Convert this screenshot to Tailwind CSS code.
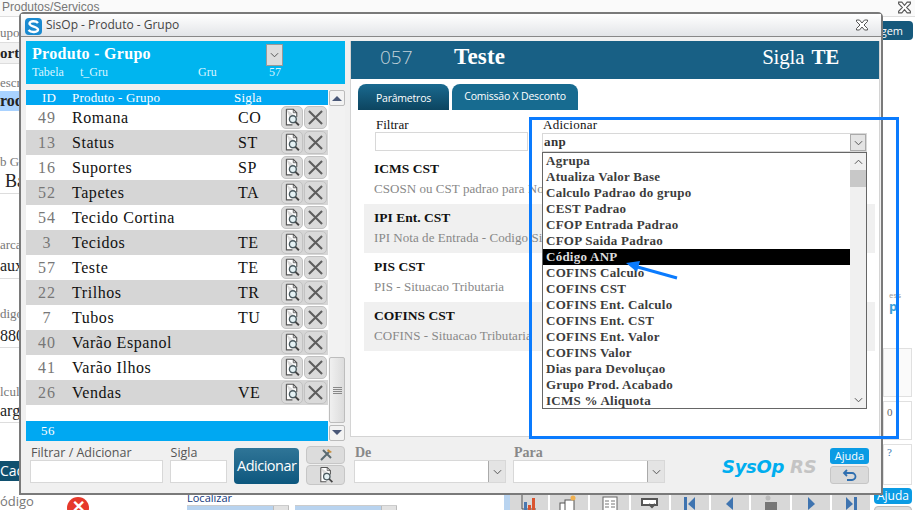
<!DOCTYPE html>
<html lang="pt">
<head>
<meta charset="utf-8">
<title>SisOp</title>
<script src="https://cdn.jsdelivr.net/npm/@tailwindcss/browser@4"></script>
</head>
<body class="m-0">
<svg class="hidden" width="0" height="0">
  <symbol id="find" viewBox="0 0 20 22">
    <path d="M3.5 1.5h8l4 4v5M3.5 1.5v18h7" fill="#fff" stroke="#555" stroke-width="1.3"/>
    <path d="M11.5 1.5v4h4" fill="none" stroke="#555" stroke-width="1"/>
    <circle cx="11" cy="13" r="4" fill="#e4f1f4" stroke="#4a5a60" stroke-width="1.6"/>
    <path d="M14 16l4 4" stroke="#444" stroke-width="2.2"/>
  </symbol>
  <symbol id="del" viewBox="2 2 16 16">
    <path d="M3 3l14 14M17 3L3 17" stroke="#5e5e5e" stroke-width="2.2" fill="none"/>
  </symbol>
  <symbol id="chev" viewBox="0 0 10 6">
    <path d="M1 1l4 4 4-4" stroke="#555" stroke-width="1.1" fill="none"/>
  </symbol>
  <symbol id="close" viewBox="0 0 14 12">
    <path d="M1.5 1h3l2.5 3 2.5-3h3v1.5L9 6l3.5 3.5V11h-3L7 8l-2.5 3h-3V9.500L5 6 1.500 2.500z" fill="#fff" stroke="#555" stroke-width="1"/>
  </symbol>
</svg>

<div class="relative w-[915px] h-[510px] overflow-hidden bg-white font-['Liberation_Serif',serif]">

  <!-- desktop behind the window -->
  <div class="flex flex-col h-full">
    <div class="flex justify-between h-[17px] bg-[#fafafa] border-b border-[#dedede] pl-[2px] pr-[3px] text-[12px] leading-[15px] text-[#777] font-['Liberation_Sans',sans-serif]">
      <span>Produtos/Servicos</span>
      <svg class="w-[15px] h-[13px] mt-[1px]"><use href="#close"/></svg>
    </div>
    <div class="flex flex-1 min-h-0">
      <div class="w-[60px] flex flex-col text-[#777] text-[13px] leading-[16px] whitespace-nowrap overflow-hidden">
        <div class="mt-[8px] h-[16px]">upo</div>
        <div class="mt-[1px] h-[22px] bg-[#f2f2f2] border-y border-[#ddd] text-[15px] leading-[20px] font-bold text-[#222]">ort</div>
        <div class="mt-[11px] h-[16px]">escr</div>
        <div class="h-[20px] bg-[#a9d2ff] text-[16px] leading-[20px] font-bold text-[#222]">rod</div>
        <div class="mt-[43px] h-[16px]">b Gr</div>
        <div class="mt-[1px] h-[23px] border-b border-[#ddd] pl-[5px] text-[18px] leading-[21px] text-[#222]">Ba</div>
        <div class="mt-[43px] h-[16px]">arca</div>
        <div class="mt-[3px] h-[23px] border-b border-[#ddd] text-[16px] leading-[20px] text-[#222]">aux</div>
        <div class="mt-[27px] h-[16px]">digo</div>
        <div class="mt-[4px] h-[22px] border-b border-[#ddd] text-[16px] leading-[20px] text-[#222]">880</div>
        <div class="mt-[36px] h-[16px]">lcul</div>
        <div class="mt-[1px] h-[22px] border-b border-[#ddd] text-[16px] leading-[20px] text-[#222]">arg</div>
        <div class="mt-[38px] h-[20px] bg-[#10506f] text-white text-[14px] leading-[20px] font-['Open_Sans',sans-serif]">Cad</div>
        <div class="mt-[12px] h-[16px] text-[13px] font-['Open_Sans',sans-serif]">ódigo</div>
      </div>
      <div class="flex-1 relative flex flex-col items-end">
        <div class="mt-[4px] mr-[2px] w-[35px] h-[19px] bg-[#16597c] rounded-[4px] text-white text-[11px] leading-[19px] text-right pr-[10px] font-['Open_Sans',sans-serif]">gem</div>
        <div class="mt-[250px] mr-[6px] w-[20px] text-[8px] leading-[9px] text-[#999] font-['Open_Sans',sans-serif]">ess</div>
        <div class="mr-[6px] w-[20px] text-[13px] leading-[14px] font-bold text-[#3aa0d8] font-['Open_Sans',sans-serif]">p</div>
        <div class="mt-[35px] mr-[3px] w-[29px] h-[49px] bg-[#fafafa] border border-[#e0e0e0]"></div>
        <div class="mt-[4px] mr-[3px] w-[29px] h-[39px] bg-white border border-[#e0e0e0] pl-[3px] text-[11px] leading-[20px] text-[#666]">0</div>
        <div class="mt-[4px] mr-[3px] w-[29px] h-[41px] bg-white border border-[#e0e0e0] pl-[3px] text-[11px] leading-[14px] text-[#3a78b0]">?</div>
      </div>
    </div>
  </div>

  <!-- lower strip behind the window -->
  <div class="absolute left-[60px] right-0 top-[494px] h-[16px] flex items-start overflow-hidden">
    <div class="relative w-[127px] h-full">
      <div class="absolute left-[7px] top-[3px] w-[22px] h-[22px] rounded-full bg-[#e6392b] text-white text-center text-[16px] leading-[18px] font-bold font-['Open_Sans',sans-serif]">✕</div>
    </div>
    <div class="flex flex-col w-[317px]">
      <div class="h-[11px] text-[11px] leading-[8px] text-[#12387c] font-['Open_Sans',sans-serif]">Localizar</div>
      <div class="flex gap-[6px]">
        <div class="w-[102px] h-[8px] bg-[#b8d3ef] border-t border-[#ccc] flex justify-end"><div class="w-[16px] bg-[#e2e2e2] border-x border-[#bbb]"></div></div>
        <div class="w-[102px] h-[8px] bg-[#b8d3ef] border-t border-[#ccc] flex justify-end"><div class="w-[16px] bg-[#e2e2e2] border-x border-[#bbb]"></div></div>
      </div>
    </div>
    <div class="w-[6px] h-full bg-[#b9d4f0]"></div>
    <div class="flex gap-[2px] h-full">
      <div class="w-[38px] bg-[#d8d8d8] flex justify-center pt-[1px]"><svg width="16" height="16" viewBox="0 0 16 16"><path d="M1 0v14h14" stroke="#555" fill="none"/><path d="M3 7h3v8H3z" fill="#4a78b0"/><path d="M7 10h3v5H7z" fill="#d9542f"/><path d="M11 3h3v12h-3z" fill="#d9542f"/></svg></div>
      <div class="w-[38px] bg-[#d8d8d8] flex justify-center"><svg width="24" height="16" viewBox="0 0 24 16"><rect x="3" y="9" width="8" height="8" fill="#fff" stroke="#555"/><rect x="8" y="6" width="9" height="11" fill="#fff" stroke="#555"/><circle cx="16" cy="4" r="2.500" fill="#f0b050"/></svg></div>
      <div class="w-[39px] bg-[#d8d8d8] flex justify-center"><svg width="18" height="16" viewBox="0 0 18 16"><rect x="2" y="3" width="14" height="14" fill="#fff" stroke="#666"/><path d="M4 7h4M4 10h4M4 13h4M10 7h4M10 10h4M10 13h4" stroke="#777"/></svg></div>
      <div class="w-[38px] bg-[#d8d8d8] flex justify-center"><svg width="18" height="16" viewBox="0 0 18 16"><rect x="1" y="5" width="15" height="6" fill="#fff" stroke="#555" stroke-width="2"/><path d="M8 10l3 3 3-3" stroke="#555" fill="none" stroke-width="2"/></svg></div>
      <div class="w-[38px] bg-[#d8d8d8] flex justify-center"><svg width="14" height="16" viewBox="0 0 14 16"><path d="M1 3h3v13H1zM12 3v13L5 10z" fill="#3f74b0"/></svg></div>
      <div class="w-[38px] bg-[#d8d8d8] flex justify-center"><svg width="14" height="16" viewBox="0 0 14 16"><path d="M10 3v13L3 10z" fill="#3f74b0"/></svg></div>
      <div class="w-[39px] bg-[#d8d8d8] flex justify-center"><svg width="18" height="16" viewBox="0 0 18 16"><circle cx="6" cy="4" r="2.500" fill="#bbb"/><rect x="3" y="8" width="12" height="8" fill="#777"/></svg></div>
      <div class="w-[38px] bg-[#d8d8d8] flex justify-center"><svg width="14" height="16" viewBox="0 0 14 16"><path d="M4 3v13l7-6z" fill="#3f74b0"/></svg></div>
      <div class="w-[38px] bg-[#d8d8d8] flex justify-center"><svg width="14" height="16" viewBox="0 0 14 16"><path d="M2 3v13l7-6zM10 3h3v13h-3z" fill="#3f74b0"/></svg></div>
    </div>
  </div>
  <div class="absolute left-[874px] top-[488px] w-[38px] h-[16px] rounded-[4px] bg-[#0a9be4] text-white text-[12px] leading-[16px] text-center font-['Open_Sans',sans-serif]">Ajuda</div>
  <div class="absolute left-[874px] top-[506px] w-[38px] h-[6px] rounded-t-[4px] bg-[#ddd] border border-[#bbb]"></div>

  <!-- dialog window -->
  <div class="absolute left-[19px] top-[12px] w-[864px] h-[483px] border-2 border-[#7a7a7a] rounded-tl-[5px] rounded-tr-[5px] bg-[#f0f0f0] flex flex-col">
    <div class="h-[23px] flex items-center pl-[4px] pr-[12px] bg-linear-to-b from-white to-[#e3e5e8] border-b border-[#888] text-[12px] text-[#444] font-['Open_Sans',sans-serif]">
      <svg width="17" height="17" viewBox="0 0 17 17" class="mr-[4px] mt-[2px]"><rect width="17" height="17" rx="4" fill="#1a8ad0"/><path d="M13 5c-2-2.500-8-2.500-8.500.5S13 8.500 13 11.500 6 15 3.500 12" fill="none" stroke="#fff" stroke-width="2.400"/></svg>
      <span class="flex-1">SisOp - Produto - Grupo</span>
      <svg class="w-[14px] h-[12px]"><use href="#close"/></svg>
    </div>

    <div class="flex flex-1 min-h-0 pl-[5px] pt-[4px] gap-[5px]">
      <!-- left column -->
      <div class="w-[319px] flex flex-col">
        <div class="h-[43px] bg-[#00b5ef] text-white px-[6px] relative">
          <div class="text-[16px] leading-[20px] pt-[3px] font-bold tracking-[0.3px] h-[23px]">Produto - Grupo</div>
          <div class="grid grid-cols-[48px_118px_71px_30px] text-[12px] leading-[14px] mt-[1px] text-[#d8f4ff]">
            <span>Tabela</span><span>t_Gru</span><span>Gru</span><span>57</span>
          </div>
          <div class="absolute left-[240px] top-[3px] w-[17px] h-[22px] bg-[#dcdcdc] border border-[#999] flex items-center justify-center"><svg class="w-[9px] h-[6px]"><use href="#chev"/></svg></div>
        </div>

        <div class="mt-[6px] h-[351px] flex bg-white">
          <div class="w-[302px] flex flex-col text-[16px] tracking-[0.55px] text-[#111]">
            <div class="h-[15px] bg-[#00a8f2] text-white text-[13px] leading-[15px] grid grid-cols-[46px_162px_1fr] tracking-[0.2px]">
              <span class="text-center">ID</span><span>Produto - Grupo</span><span>Sigla</span>
            </div>
            <div class="h-[25px] grid grid-cols-[42px_170px_43px_23px_23px] items-center bg-white"><span class="text-center text-[#777] tracking-[1px]">49</span><span class="pl-[4px]">Romana</span><span>CO</span><svg class="box-border w-[22px] h-[23px] p-[1px] bg-[#dadada] rounded-[5px] border border-[#c2c2c2]"><use href="#find"/></svg><svg class="box-border w-[23px] h-[23px] p-[3px] bg-[#dadada] rounded-[5px] border border-[#c2c2c2]"><use href="#del"/></svg></div>
            <div class="h-[25px] grid grid-cols-[42px_170px_43px_23px_23px] items-center bg-[#d6d6d6]"><span class="text-center text-[#777] tracking-[1px]">13</span><span class="pl-[4px]">Status</span><span>ST</span><svg class="box-border w-[22px] h-[23px] p-[1px] bg-[#dadada] rounded-[5px] border border-[#c2c2c2]"><use href="#find"/></svg><svg class="box-border w-[23px] h-[23px] p-[3px] bg-[#dadada] rounded-[5px] border border-[#c2c2c2]"><use href="#del"/></svg></div>
            <div class="h-[25px] grid grid-cols-[42px_170px_43px_23px_23px] items-center bg-white"><span class="text-center text-[#777] tracking-[1px]">16</span><span class="pl-[4px]">Suportes</span><span>SP</span><svg class="box-border w-[22px] h-[23px] p-[1px] bg-[#dadada] rounded-[5px] border border-[#c2c2c2]"><use href="#find"/></svg><svg class="box-border w-[23px] h-[23px] p-[3px] bg-[#dadada] rounded-[5px] border border-[#c2c2c2]"><use href="#del"/></svg></div>
            <div class="h-[25px] grid grid-cols-[42px_170px_43px_23px_23px] items-center bg-[#d6d6d6]"><span class="text-center text-[#777] tracking-[1px]">52</span><span class="pl-[4px]">Tapetes</span><span>TA</span><svg class="box-border w-[22px] h-[23px] p-[1px] bg-[#dadada] rounded-[5px] border border-[#c2c2c2]"><use href="#find"/></svg><svg class="box-border w-[23px] h-[23px] p-[3px] bg-[#dadada] rounded-[5px] border border-[#c2c2c2]"><use href="#del"/></svg></div>
            <div class="h-[25px] grid grid-cols-[42px_170px_43px_23px_23px] items-center bg-white"><span class="text-center text-[#777] tracking-[1px]">54</span><span class="pl-[4px]">Tecido Cortina</span><span></span><svg class="box-border w-[22px] h-[23px] p-[1px] bg-[#dadada] rounded-[5px] border border-[#c2c2c2]"><use href="#find"/></svg><svg class="box-border w-[23px] h-[23px] p-[3px] bg-[#dadada] rounded-[5px] border border-[#c2c2c2]"><use href="#del"/></svg></div>
            <div class="h-[25px] grid grid-cols-[42px_170px_43px_23px_23px] items-center bg-[#d6d6d6]"><span class="text-center text-[#777] tracking-[1px]">3</span><span class="pl-[4px]">Tecidos</span><span>TE</span><svg class="box-border w-[22px] h-[23px] p-[1px] bg-[#dadada] rounded-[5px] border border-[#c2c2c2]"><use href="#find"/></svg><svg class="box-border w-[23px] h-[23px] p-[3px] bg-[#dadada] rounded-[5px] border border-[#c2c2c2]"><use href="#del"/></svg></div>
            <div class="h-[25px] grid grid-cols-[42px_170px_43px_23px_23px] items-center bg-white"><span class="text-center text-[#777] tracking-[1px]">57</span><span class="pl-[4px]">Teste</span><span>TE</span><svg class="box-border w-[22px] h-[23px] p-[1px] bg-[#dadada] rounded-[5px] border border-[#c2c2c2]"><use href="#find"/></svg><svg class="box-border w-[23px] h-[23px] p-[3px] bg-[#dadada] rounded-[5px] border border-[#c2c2c2]"><use href="#del"/></svg></div>
            <div class="h-[25px] grid grid-cols-[42px_170px_43px_23px_23px] items-center bg-[#d6d6d6]"><span class="text-center text-[#777] tracking-[1px]">22</span><span class="pl-[4px]">Trilhos</span><span>TR</span><svg class="box-border w-[22px] h-[23px] p-[1px] bg-[#dadada] rounded-[5px] border border-[#c2c2c2]"><use href="#find"/></svg><svg class="box-border w-[23px] h-[23px] p-[3px] bg-[#dadada] rounded-[5px] border border-[#c2c2c2]"><use href="#del"/></svg></div>
            <div class="h-[25px] grid grid-cols-[42px_170px_43px_23px_23px] items-center bg-white"><span class="text-center text-[#777] tracking-[1px]">7</span><span class="pl-[4px]">Tubos</span><span>TU</span><svg class="box-border w-[22px] h-[23px] p-[1px] bg-[#dadada] rounded-[5px] border border-[#c2c2c2]"><use href="#find"/></svg><svg class="box-border w-[23px] h-[23px] p-[3px] bg-[#dadada] rounded-[5px] border border-[#c2c2c2]"><use href="#del"/></svg></div>
            <div class="h-[25px] grid grid-cols-[42px_170px_43px_23px_23px] items-center bg-[#d6d6d6]"><span class="text-center text-[#777] tracking-[1px]">40</span><span class="pl-[4px]">Varão Espanol</span><span></span><svg class="box-border w-[22px] h-[23px] p-[1px] bg-[#dadada] rounded-[5px] border border-[#c2c2c2]"><use href="#find"/></svg><svg class="box-border w-[23px] h-[23px] p-[3px] bg-[#dadada] rounded-[5px] border border-[#c2c2c2]"><use href="#del"/></svg></div>
            <div class="h-[25px] grid grid-cols-[42px_170px_43px_23px_23px] items-center bg-white"><span class="text-center text-[#777] tracking-[1px]">41</span><span class="pl-[4px]">Varão Ilhos</span><span></span><svg class="box-border w-[22px] h-[23px] p-[1px] bg-[#dadada] rounded-[5px] border border-[#c2c2c2]"><use href="#find"/></svg><svg class="box-border w-[23px] h-[23px] p-[3px] bg-[#dadada] rounded-[5px] border border-[#c2c2c2]"><use href="#del"/></svg></div>
            <div class="h-[25px] grid grid-cols-[42px_170px_43px_23px_23px] items-center bg-[#d6d6d6]"><span class="text-center text-[#777] tracking-[1px]">26</span><span class="pl-[4px]">Vendas</span><span>VE</span><svg class="box-border w-[22px] h-[23px] p-[1px] bg-[#dadada] rounded-[5px] border border-[#c2c2c2]"><use href="#find"/></svg><svg class="box-border w-[23px] h-[23px] p-[3px] bg-[#dadada] rounded-[5px] border border-[#c2c2c2]"><use href="#del"/></svg></div>
            <div class="h-[16px]"></div>
            <div class="h-[20px] bg-[#00a8f2] text-white text-[13px] leading-[20px] pl-[15px]">56</div>
          </div>
          <div class="w-[17px] flex flex-col bg-[#f2f2f2] border-l border-[#f8f8f8]">
            <div class="h-[16px] bg-[#f3f3f3] border border-[#bbb] rounded-[2px] flex items-center justify-center"><svg width="10" height="6" viewBox="0 0 10 6"><path d="M0 6l5-5 5 5z" fill="#4a5878"/></svg></div>
            <div class="mt-[251px] h-[66px] bg-linear-to-r from-[#f0f0f0] to-[#dcdcdc] border border-[#bdbdbd] rounded-[2px] flex items-center justify-center"><svg width="9" height="7"><path d="M0 .5h9M0 2.500h9M0 4.500h9M0 6.500h9" stroke="#888"/></svg></div>
            <div class="mt-[2px] h-[16px] bg-[#f3f3f3] border border-[#bbb] rounded-[2px] flex items-center justify-center"><svg width="10" height="6" viewBox="0 0 10 6"><path d="M0 0l5 5 5-5z" fill="#4a5878"/></svg></div>
          </div>
        </div>

        <div class="flex items-start pl-[4px] pt-[5px]">
          <div class="w-[133px] mr-[7px]">
            <div class="h-[14px] pl-[1px] text-[12.5px] leading-[14px] text-[#555] font-['Open_Sans',sans-serif]">Filtrar / Adicionar</div>
            <div class="h-[23px] bg-white border border-[#d8d8d8]"></div>
          </div>
          <div class="w-[58px] mr-[7px]">
            <div class="h-[14px] pl-[1px] text-[12.5px] leading-[14px] text-[#555] font-['Open_Sans',sans-serif]">Sigla</div>
            <div class="h-[23px] bg-white border border-[#d8d8d8]"></div>
          </div>
          <div class="w-[65px] h-[36px] mt-[2px] mr-[7px] rounded-[4px] bg-linear-to-b from-[#2f7597] to-[#0c577e] text-white text-[14.5px] leading-[35px] text-center font-['Open_Sans',sans-serif] tracking-[-0.5px]">Adicionar</div>
          <div class="w-[39px] flex flex-col gap-[1px]">
            <div class="h-[18px] bg-[#dcdcdc] border border-[#c6c6c6] rounded-[4px] flex items-center justify-center"><svg width="14" height="14" viewBox="0 0 14 14"><path d="M2 12l8-8M4 2l8 8" stroke="#5a6a70" stroke-width="2"/><path d="M9 1l4 3-2 1-3-2z" fill="#c78f3e"/></svg></div>
            <div class="h-[20px] bg-[#dcdcdc] border border-[#c6c6c6] rounded-[4px] flex items-center justify-center"><svg class="w-[16px] h-[18px]"><use href="#find"/></svg></div>
          </div>
        </div>
      </div>

      <!-- right column -->
      <div class="w-[530px] flex flex-col">
        <div class="relative h-[396px] bg-white border-x border-b border-[#d4d4d4]">
          <div class="h-[38px] bg-[#186085] flex items-center text-white pb-[5px]">
            <span class="w-[103px] pl-[29px] text-[19px] text-[#c3d2da] font-['Open_Sans',sans-serif] font-light">057</span>
            <span class="flex-1 text-[23px] font-bold tracking-[0.2px]">Teste</span>
            <span class="pr-[40px] text-[21px] tracking-[-0.2px]">Sigla <b class="ml-[2px]">TE</b></span>
          </div>
          <div class="flex gap-[3px] pl-[7px] mt-[5px] h-[26px] items-end text-white text-[10.5px] font-['Open_Sans',sans-serif] tracking-[-0.2px]">
            <div class="w-[91px] h-[26px] rounded-t-[8px] bg-linear-to-b from-[#1a6a90] to-[#0d4560] text-center leading-[29px]">Parâmetros</div>
            <div class="w-[126px] h-[26px] rounded-t-[8px] bg-[#176b90] text-center leading-[25px]">Comissão X Desconto</div>
          </div>
          <div class="flex pt-[6px] text-[13px] text-[#111] h-[46px]">
            <div class="ml-[24px] w-[153px]">
              <div class="pl-[1px] h-[16px] leading-[18px]">Filtrar</div>
              <div class="h-[19px] bg-white border border-[#d8d8d8]"></div>
            </div>
          </div>
          <div class="flex flex-col mt-[-1px]">
            <div class="h-[49px] pl-[23px] mr-[4px] pt-[5px]"><div class="text-[13.5px] leading-[18px] font-bold text-[#111]">ICMS CST</div><div class="mt-[3px] text-[13px] leading-[16px] text-[#888] tracking-[0.05px]">CSOSN ou CST padrao para Nota Fiscal</div></div>
            <div class="h-[49px] ml-[13px] pl-[10px] mr-[4px] pt-[5px] bg-[#f0f0f0]"><div class="text-[13.5px] leading-[18px] font-bold text-[#111]">IPI Ent. CST</div><div class="mt-[3px] text-[13px] leading-[16px] text-[#888] tracking-[0.05px]">IPI Nota de Entrada - Codigo Situacao</div></div>
            <div class="h-[49px] pl-[23px] mr-[4px] pt-[5px]"><div class="text-[13.5px] leading-[18px] font-bold text-[#111]">PIS CST</div><div class="mt-[3px] text-[13px] leading-[16px] text-[#888] tracking-[0.05px]">PIS - Situacao Tributaria</div></div>
            <div class="h-[49px] ml-[13px] pl-[10px] mr-[4px] pt-[5px] bg-[#f0f0f0]"><div class="text-[13.5px] leading-[18px] font-bold text-[#111]">COFINS CST</div><div class="mt-[3px] text-[13px] leading-[16px] text-[#888] tracking-[0.05px]">COFINS - Situacao Tributaria</div></div>
          </div>

          <!-- open combo box over the rows -->
          <div class="absolute left-[191px] top-[76px] w-[325px]">
            <div class="h-[16px] pl-[1px] text-[13px] leading-[16px] text-[#111] tracking-[0.25px]">Adicionar</div>
            <div class="h-[19px] bg-white border border-[#d8d8d8] flex justify-between pl-[1px]">
              <span class="text-[13px] leading-[16px] font-bold text-[#333] tracking-[0.4px]">anp</span>
              <div class="w-[16px] h-[17px] bg-[#e4e4e4] border border-[#aaa] flex items-center justify-center"><svg class="w-[9px] h-[6px]"><use href="#chev"/></svg></div>
            </div>
            <div class="h-[257px] bg-white border border-[#666] flex text-[13px] leading-[16px] font-bold text-[#3c3c3c] tracking-[0.25px]">
              <div class="flex-1 flex flex-col">
                <div class="h-[16px] pl-[3px]">Agrupa</div>
                <div class="h-[16px] pl-[3px]">Atualiza Valor Base</div>
                <div class="h-[16px] pl-[3px]">Calculo Padrao do grupo</div>
                <div class="h-[16px] pl-[3px]">CEST Padrao</div>
                <div class="h-[16px] pl-[3px]">CFOP Entrada Padrao</div>
                <div class="h-[16px] pl-[3px]">CFOP Saida Padrao</div>
                <div class="h-[16px] pl-[3px] bg-black text-[#ddd]">Código ANP</div>
                <div class="h-[16px] pl-[3px]">COFINS Calculo</div>
                <div class="h-[16px] pl-[3px]">COFINS CST</div>
                <div class="h-[16px] pl-[3px]">COFINS Ent. Calculo</div>
                <div class="h-[16px] pl-[3px]">COFINS Ent. CST</div>
                <div class="h-[16px] pl-[3px]">COFINS Ent. Valor</div>
                <div class="h-[16px] pl-[3px]">COFINS Valor</div>
                <div class="h-[16px] pl-[3px]">Dias para Devoluçao</div>
                <div class="h-[16px] pl-[3px]">Grupo Prod. Acabado</div>
                <div class="h-[16px] pl-[3px]">ICMS % Aliquota</div>
              </div>
              <div class="w-[16px] bg-[#f0f0f0] flex flex-col">
                <div class="h-[17px] flex items-center justify-center"><svg class="w-[9px] h-[6px] rotate-180"><use href="#chev"/></svg></div>
                <div class="h-[17px] bg-[#c8c8c8]"></div>
                <div class="mt-auto h-[17px] flex items-center justify-center"><svg class="w-[9px] h-[6px]"><use href="#chev"/></svg></div>
              </div>
            </div>
          </div>
        </div>

        <div class="flex items-start pl-[4px] pt-[8px]">
          <div class="w-[152px] mr-[7px]">
            <div class="h-[15px] pl-[1px] text-[14px] leading-[15px] font-bold text-[#888]">De</div>
            <div class="h-[23px] bg-white border border-[#d8d8d8] flex justify-end"><div class="w-[17px] bg-[#e4e4e4] border-l border-[#aaa] flex items-center justify-center"><svg class="w-[9px] h-[6px]"><use href="#chev"/></svg></div></div>
          </div>
          <div class="w-[152px]">
            <div class="h-[15px] pl-[1px] text-[14px] leading-[15px] font-bold text-[#888]">Para</div>
            <div class="h-[23px] bg-white border border-[#d8d8d8] flex justify-end"><div class="w-[17px] bg-[#e4e4e4] border-l border-[#aaa] flex items-center justify-center"><svg class="w-[9px] h-[6px]"><use href="#chev"/></svg></div></div>
          </div>
          <div class="w-[165px] mt-[10px] pl-[57px] text-[18px] leading-[24px] italic font-bold font-['DejaVu_Sans',sans-serif] whitespace-nowrap tracking-[-0.3px] text-[#00aeef]">SysOp <span class="text-[#c4c4c4]">RS</span></div>
          <div class="w-[39px] flex flex-col gap-[2px] mt-[3px]">
            <div class="h-[16px] rounded-[3px] bg-[#0a9be4] text-white text-[11px] leading-[16px] text-center font-['Open_Sans',sans-serif]">Ajuda</div>
            <div class="h-[18px] rounded-[3px] bg-[#dadada] border border-[#c6c6c6] flex items-center justify-center"><svg width="16" height="13" viewBox="0 0 16 13"><path d="M2 4h8a3.500 3.500 0 0 1 0 7H5M5 1L2 4l3 3" fill="none" stroke="#2f6fb0" stroke-width="1.800"/></svg></div>
          </div>
        </div>
      </div>
    </div>
  </div>

  <!-- annotation drawn on the screenshot -->
  <div class="absolute left-[529px] top-[117px] w-[370px] h-[322px] border-[3px] border-[#0a7bfe] pointer-events-none"></div>
  <svg class="absolute left-[620px] top-[258px] pointer-events-none" width="62" height="24" viewBox="0 0 62 24"><path d="M57 20L14 8" stroke="#0a7bfe" stroke-width="3" fill="none"/><path d="M6 5l14-2-3 11z" fill="#0a7bfe"/></svg>
</div>
</body>
</html>
